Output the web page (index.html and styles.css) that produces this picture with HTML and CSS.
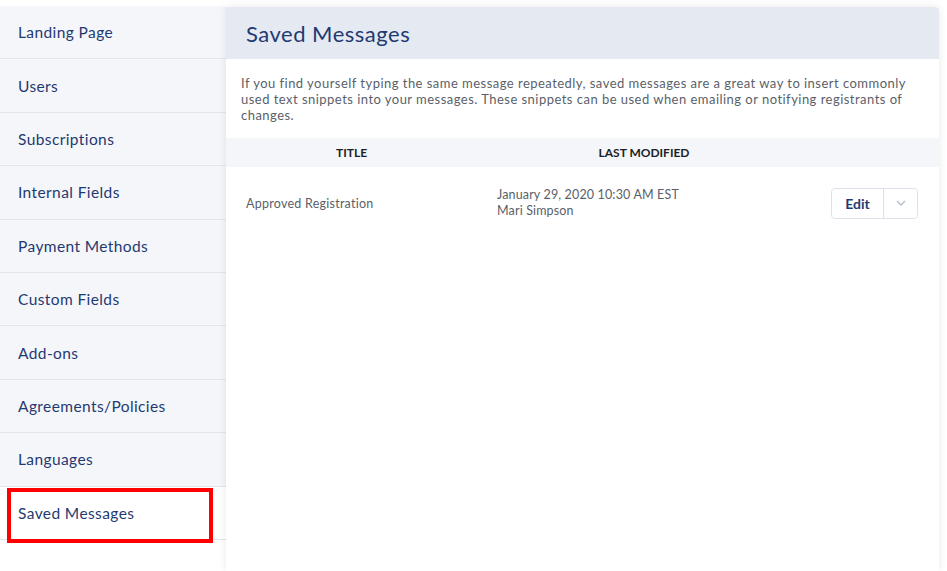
FILE: index.html
```html
<!DOCTYPE html>
<html lang="en">
<head>
  <meta charset="UTF-8">
  <title>Saved Messages</title>
  <meta name="viewport" content="width=device-width, initial-scale=1">
  <link rel="stylesheet" href="styles.css">
</head>
<body>

  <div class="layout">
    <nav class="sidebar">
      <a class="nav-item">Landing Page</a>
      <a class="nav-item">Users</a>
      <a class="nav-item">Subscriptions</a>
      <a class="nav-item">Internal Fields</a>
      <a class="nav-item">Payment Methods</a>
      <a class="nav-item">Custom Fields</a>
      <a class="nav-item">Add-ons</a>
      <a class="nav-item">Agreements/Policies</a>
      <a class="nav-item">Languages</a>
      <a class="nav-item active">Saved Messages</a>
      <div class="highlight-box"></div>
    </nav>

    <main class="panel">
      <h2 class="panel-title">Saved Messages</h2>

      <p class="intro">If you find yourself typing the same message repeatedly, saved messages are a great way to insert commonly used text snippets into your messages. These snippets can be used when emailing or notifying registrants of changes.</p>

      <table class="messages">
        <thead>
          <tr>
            <th class="col-title">TITLE</th>
            <th class="col-modified">LAST MODIFIED</th>
            <th class="col-actions"></th>
          </tr>
        </thead>
        <tbody>
          <tr>
            <td class="cell-title">Approved Registration</td>
            <td class="cell-modified">
              <div>January 29, 2020 10:30 AM EST</div>
              <div>Mari Simpson</div>
            </td>
            <td class="cell-actions">
              <div class="btn-group">
                <button type="button" class="btn-edit">Edit</button>
                <button type="button" class="btn-more">
                  <svg width="10" height="6" viewBox="0 0 10 6"><path d="M1 1l4 4 4-4" fill="none" stroke="#b4bccb" stroke-width="1.3"/></svg>
                </button>
              </div>
            </td>
          </tr>
        </tbody>
      </table>
    </main>
  </div>

</body>
</html>
```

FILE: styles.css
```css
body {
  margin: 0;
  background: #fff;
  font-family: Lato, "Open Sans", sans-serif;
  color: #1f3a70;
}
.layout {
  display: flex;
  align-items: flex-start;
  padding-top: 6px;
  min-height: 565px;
}
.sidebar {
  position: relative;
  width: 226px;
  flex-shrink: 0;
  display: flex;
  flex-direction: column;
}
.nav-item {
  display: flex;
  align-items: center;
  box-sizing: border-box;
  height: 53.4px;
  padding-left: 18px;
  background: #f5f6fa;
  border-bottom: 1px solid #e3e5ea;
  font-size: 15.5px;
  letter-spacing: 0.4px;
  color: #1f3a70;
}
.nav-item.active {
  background: #fff;
}
.highlight-box {
  position: absolute;
  left: 7px;
  top: 482px;
  width: 198px;
  height: 47px;
  border: 4px solid #ff0000;
}
.panel {
  width: 713px;
  min-height: 564px;
  margin-top: 1px;
  background: #fff;
  border-radius: 0 4px 0 0;
  box-shadow: 0 0 8px rgba(0, 0, 0, 0.09);
  position: relative;
}
.panel-title {
  margin: 0;
  height: 52px;
  display: flex;
  align-items: center;
  padding-left: 20px;
  background: #e5e9f2;
  border-radius: 0 4px 0 0;
  font-size: 22px;
  font-weight: 400;
  letter-spacing: 0.5px;
  color: #1f3a70;
}
.intro {
  margin: 0;
  padding: 16px 20px 15px 15px;
  font-size: 13px;
  line-height: 16px;
  letter-spacing: 0.47px;
  color: #5a5f69;
}
.messages {
  width: 100%;
  border-collapse: collapse;
}
.messages th {
  height: 29px;
  background: #f5f6fa;
  font-size: 12px;
  font-weight: 700;
  color: #1c1f26;
  text-align: center;
  padding: 0;
}
.col-title {
  width: 251px;
}
.col-modified {
  width: 334px;
}
.messages td {
  height: 70px;
  font-size: 12.5px;
  color: #5a5f69;
  vertical-align: middle;
}
.cell-title {
  padding-left: 20px;
  letter-spacing: 0.25px;
}
.cell-modified {
  padding-left: 20px;
  line-height: 16px;
  letter-spacing: 0.15px;
}
.cell-actions {
  text-align: right;
  padding-right: 21px;
}
.btn-group {
  display: inline-flex;
  height: 31px;
  border: 1px solid #dde2ea;
  border-radius: 4px;
  box-sizing: border-box;
}
.btn-group button {
  background: #fff;
  border: none;
  padding: 0;
  cursor: pointer;
  font-family: inherit;
}
.btn-edit {
  width: 52px;
  font-size: 14px;
  font-weight: 700;
  color: #1f3a70;
  border-right: 1px solid #dde2ea !important;
  border-radius: 4px 0 0 4px;
}
.btn-more {
  width: 33px;
  display: flex;
  align-items: center;
  justify-content: center;
  border-radius: 0 4px 4px 0;
}
```
